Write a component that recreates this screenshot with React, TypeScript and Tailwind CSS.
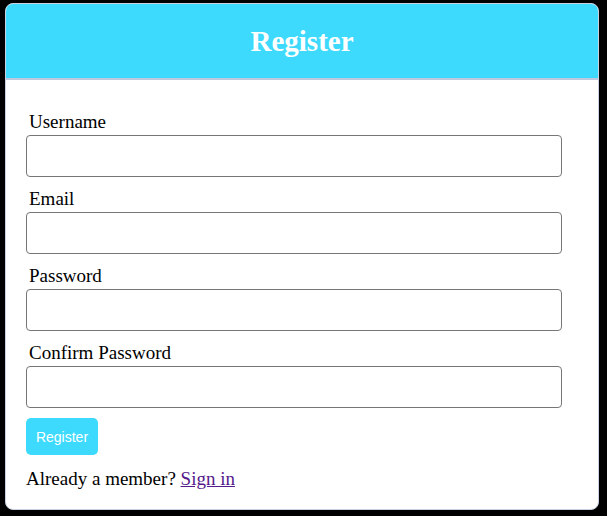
const fields = ["Username", "Email", "Password", "Confirm Password"];

export default function App() {
  return (
    <div className="min-h-screen bg-black pt-[3px] pl-[5px]" style={{ fontFamily: '"Liberation Serif", serif' }}>
      <div className="w-[594px] h-[507px] overflow-hidden rounded-[8px] border border-[#c8d0e2] bg-white">
        <div className="flex h-[76px] items-center justify-center border-b-2 border-[#c0c8e0] bg-[#3ddafe] pt-[2px]">
          <h2 className="text-[29px] font-bold text-white">Register</h2>
        </div>
        <form className="pl-[20px] pt-[31px]" onSubmit={(e) => e.preventDefault()}>
          <div className="flex flex-col gap-[11px]">
            {fields.map((f) => (
              <div key={f}>
                <label className="block pl-[3px] text-[19px] leading-[21px] text-black">{f}</label>
                <input
                  type={f.includes("Password") ? "password" : "text"}
                  className="mt-[3px] block h-[42px] w-[536px] rounded-[4px] border border-[#767676] bg-white"
                />
              </div>
            ))}
          </div>
          <button
            type="submit"
            className="mt-[10px] h-[37px] w-[72px] rounded-[5px] bg-[#3ddafe] pt-[2px] text-[14px] text-white"
            style={{ fontFamily: '"Liberation Sans", sans-serif' }}
          >
            Register
          </button>
          <p className="mt-[13px] text-[19px] leading-[21px] text-black">
            Already a member?{" "}
            <a href="#" className="text-[#551a8b] underline">
              Sign in
            </a>
          </p>
        </form>
      </div>
    </div>
  );
}
